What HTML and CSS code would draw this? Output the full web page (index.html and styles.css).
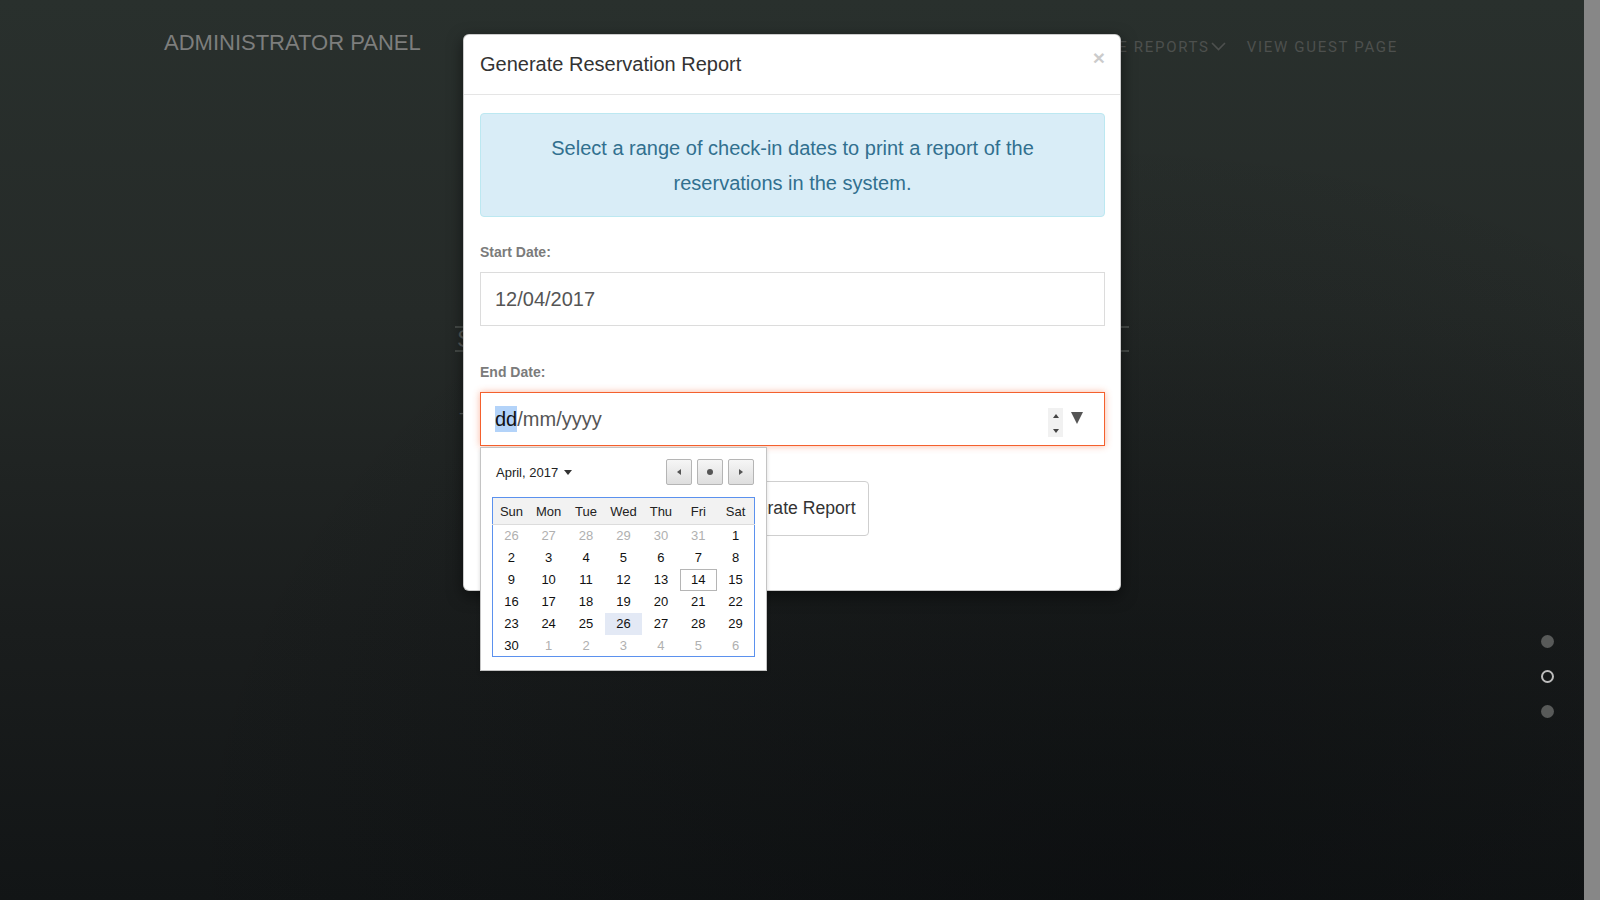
FILE: index.html
```html
<!DOCTYPE html>
<html lang="en">
<head>
<meta charset="utf-8">
<title>Administrator Panel</title>
<link rel="stylesheet" href="styles.css">
</head>
<body>
<div class="screen">
  <div class="page">
    <header class="navbar">
      <div class="brand">ADMINISTRATOR PANEL</div>
      <nav class="nav">
        <span class="nav-item">RESERVATIONS</span>
        <span class="nav-item">GENERATE REPORTS<svg class="chev" width="15" height="9" viewBox="0 0 15 9"><path d="M1 1 L7.5 7.5 L14 1" fill="none" stroke="currentColor" stroke-width="1.6"/></svg></span>
        <span class="nav-item">VIEW GUEST PAGE</span>
      </nav>
    </header>

    <section class="hero">
      <div class="hero-title">SEARCH RESERVATIONS</div>
      <div class="hero-line">- Search a reservation by the guest name or code (reservation)</div>
    </section>

    <div class="dots">
      <span class="dot"></span>
      <span class="dot ring"></span>
      <span class="dot"></span>
    </div>

    <div class="modal-layer">
      <div class="modal">
        <div class="modal-header">
          <h4 class="modal-title">Generate Reservation Report</h4>
          <span class="close">&times;</span>
        </div>
        <div class="modal-body">
          <div class="alert">Select a range of check-in dates to print a report of the reservations in the system.</div>

          <label class="label">Start Date:</label>
          <div class="input">12/04/2017</div>

          <label class="label label-end">End Date:</label>
          <div class="field">
            <div class="input focus">
              <span class="value"><span class="sel">dd</span>/mm/yyyy</span>
              <span class="spin"><span class="up"></span><span class="down"></span></span>
              <span class="drop"></span>
            </div>

            <div class="picker">
              <div class="picker-head">
                <span class="month">April, 2017 <span class="caret"></span></span>
                <div class="pbtns">
                  <span class="pbtn"><span class="tri-l"></span></span>
                  <span class="pbtn"><span class="pdot"></span></span>
                  <span class="pbtn"><span class="tri-r"></span></span>
                </div>
              </div>
              <table class="cal">
                <thead>
                  <tr><th>Sun</th><th>Mon</th><th>Tue</th><th>Wed</th><th>Thu</th><th>Fri</th><th>Sat</th></tr>
                </thead>
                <tbody>
                  <tr><td class="out">26</td><td class="out">27</td><td class="out">28</td><td class="out">29</td><td class="out">30</td><td class="out">31</td><td>1</td></tr>
                  <tr><td>2</td><td>3</td><td>4</td><td>5</td><td>6</td><td>7</td><td>8</td></tr>
                  <tr><td>9</td><td>10</td><td>11</td><td>12</td><td>13</td><td class="today">14</td><td>15</td></tr>
                  <tr><td>16</td><td>17</td><td>18</td><td>19</td><td>20</td><td>21</td><td>22</td></tr>
                  <tr><td>23</td><td>24</td><td>25</td><td class="hover">26</td><td>27</td><td>28</td><td>29</td></tr>
                  <tr><td>30</td><td class="out">1</td><td class="out">2</td><td class="out">3</td><td class="out">4</td><td class="out">5</td><td class="out">6</td></tr>
                </tbody>
              </table>
            </div>
          </div>

          <div class="actions">
            <button class="btn">Generate Report</button>
          </div>
        </div>
      </div>
    </div>
  </div>
  <div class="scrollbar"></div>
</div>
</body>
</html>
```

FILE: styles.css
```css
html, body {
  margin: 0;
  padding: 0;
  height: 100%;
  overflow: hidden;
}

body {
  font-family: "Liberation Sans", Arial, sans-serif;
  color: #333;
}

.screen {
  display: flex;
  width: 1600px;
  height: 900px;
}

.page {
  position: relative;
  flex: 1;
  overflow: hidden;
  background:
    radial-gradient(ellipse at 70% 100%, rgba(8, 10, 12, 0.5) 0%, rgba(8, 10, 12, 0) 60%),
    linear-gradient(180deg, #29302d 0%, #252a28 35%, #1a1d1d 70%, #121516 100%);
}

.scrollbar {
  width: 16px;
  background: #878787;
}

/* navbar */
.navbar {
  display: flex;
  justify-content: space-between;
  align-items: center;
  padding: 30px 186px 0 164px;
  height: 26px;
}

.brand {
  font-size: 22px;
  color: #7d7e7d;
  margin-top: -1px;
}

.nav {
  display: flex;
  align-items: center;
  gap: 21px;
  font-family: Roboto, "Liberation Sans", sans-serif;
  font-size: 15px;
  letter-spacing: 1.7px;
  color: #4d504e;
  margin-top: 7px;
}

.nav-item {
  display: flex;
  align-items: center;
}

.chev {
  margin-left: 1px;
}

/* hero behind */
.hero {
  width: 674px;
  margin: 270px auto 0;
}

.hero-title {
  border-top: 2px solid #454a47;
  border-bottom: 2px solid #454a47;
  height: 22px;
  padding-left: 2px;
  font-size: 24px;
  line-height: 22px;
  color: #575a58;
}

.hero-line {
  margin-top: 52px;
  padding-left: 4px;
  font-size: 16px;
  color: #575a58;
}

/* dots */
.dots {
  position: absolute;
  right: 30px;
  top: 635px;
  display: flex;
  flex-direction: column;
  gap: 22px;
}

.dot {
  width: 13px;
  height: 13px;
  border-radius: 50%;
  background: #585a59;
  box-sizing: border-box;
}

.dot.ring {
  background: transparent;
  border: 2px solid #bdbdbd;
}

/* modal */
.modal-layer {
  position: absolute;
  inset: 0;
}

.modal {
  width: 658px;
  margin: 34px auto 0;
  background: #fff;
  border: 1px solid rgba(0, 0, 0, 0.2);
  border-radius: 6px;
  box-shadow: 0 5px 15px rgba(0, 0, 0, 0.5);
  box-sizing: border-box;
}

.modal-header {
  display: flex;
  justify-content: space-between;
  align-items: flex-start;
  padding: 15px 15px 16px 16px;
  border-bottom: 1px solid #e5e5e5;
}

.modal-title {
  margin: 0;
  font-size: 20px;
  font-weight: normal;
  line-height: 28px;
  color: #333;
}

.close {
  font-size: 21px;
  font-weight: bold;
  line-height: 1;
  color: #000;
  opacity: 0.2;
  margin-top: -3px;
}

.modal-body {
  padding: 18px 15px 54px 16px;
}

.alert {
  background: #d9edf7;
  border: 1px solid #bce8f1;
  border-radius: 4px;
  color: #31708f;
  font-size: 20px;
  line-height: 35px;
  padding: 17px 40px 15px;
  text-align: center;
  margin-bottom: 25px;
}

.label {
  display: block;
  font-size: 14px;
  font-weight: bold;
  line-height: 20px;
  color: #7b7b7b;
  margin-bottom: 10px;
}

.label-end {
  margin-top: 36px;
}

.input {
  height: 54px;
  box-sizing: border-box;
  border: 1px solid #dcdcdc;
  padding: 0 21px 0 14px;
  display: flex;
  align-items: center;
  font-size: 20px;
  color: #555;
}

.input.focus {
  border-color: #f4602d;
  box-shadow: 0 0 7px rgba(244, 96, 45, 0.45);
}

.field {
  position: relative;
}

.value {
  flex: 1;
}

.sel {
  background: #b3d3f9;
  color: #111;
  padding: 2px 0;
}

.spin {
  width: 15px;
  height: 29px;
  background: #f1f1f1;
  display: flex;
  flex-direction: column;
  justify-content: space-between;
  align-items: center;
  padding: 6px 0 4px;
  box-sizing: border-box;
  margin-right: 8px;
  margin-top: 6px;
}

.up {
  width: 0;
  height: 0;
  border-left: 3px solid transparent;
  border-right: 3px solid transparent;
  border-bottom: 4px solid #444;
}

.down {
  width: 0;
  height: 0;
  border-left: 3px solid transparent;
  border-right: 3px solid transparent;
  border-top: 4px solid #444;
}

.drop {
  width: 0;
  height: 0;
  border-left: 6.5px solid transparent;
  border-right: 6.5px solid transparent;
  border-top: 12px solid #555;
  margin-top: -2px;
}

/* picker */
.picker {
  position: absolute;
  left: 0;
  top: calc(100% + 1px);
  width: 287px;
  box-sizing: border-box;
  background: #fff;
  border: 1px solid #c4c4c4;
  box-shadow: 0 2px 4px rgba(0, 0, 0, 0.15);
  padding: 11px 12px 13px 11px;
  z-index: 2;
}

.picker-head {
  display: flex;
  justify-content: space-between;
  align-items: center;
  height: 26px;
  margin-bottom: 12px;
}

.month {
  font-size: 13px;
  color: #222;
  padding-left: 4px;
  display: flex;
  align-items: center;
}

.caret {
  display: inline-block;
  width: 0;
  height: 0;
  border-left: 4px solid transparent;
  border-right: 4px solid transparent;
  border-top: 5px solid #333;
  margin-left: 6px;
}

.pbtns {
  display: flex;
  gap: 5px;
}

.pbtn {
  width: 26px;
  height: 26px;
  box-sizing: border-box;
  border: 1px solid #b5b5b5;
  border-radius: 2px;
  background: linear-gradient(#f6f6f6, #dedede);
  display: flex;
  align-items: center;
  justify-content: center;
}

.tri-l {
  width: 0;
  height: 0;
  border-top: 3.5px solid transparent;
  border-bottom: 3.5px solid transparent;
  border-right: 4px solid #555;
}

.tri-r {
  width: 0;
  height: 0;
  border-top: 3.5px solid transparent;
  border-bottom: 3.5px solid transparent;
  border-left: 4px solid #555;
}

.pdot {
  width: 6px;
  height: 6px;
  border-radius: 50%;
  background: #555;
}

.cal {
  width: 263px;
  border-collapse: collapse;
  border: 1px solid #5b91ee;
  table-layout: fixed;
  font-size: 13px;
}

.cal th {
  height: 26px;
  background: #f2f2f2;
  border-bottom: 1px solid #dcdcdc;
  font-weight: normal;
  color: #222;
  padding: 0;
}

.cal td {
  height: 22px;
  padding: 0;
  text-align: center;
  color: #111;
  box-sizing: border-box;
}

.cal td.out {
  color: #b0b0b0;
}

.cal td.today {
  outline: 1px solid #b5b5b5;
  outline-offset: -1px;
}

.cal td.hover {
  background: #e3e9f5;
}

.actions {
  display: flex;
  justify-content: center;
  margin-top: 35px;
  padding-right: 5px;
}

.btn {
  height: 55px;
  padding: 0 12px;
  border: 1px solid #cfcfcf;
  border-radius: 4px;
  background: #fff;
  font-family: "Liberation Sans", Arial, sans-serif;
  font-size: 17.6px;
  color: #333;
}
```
